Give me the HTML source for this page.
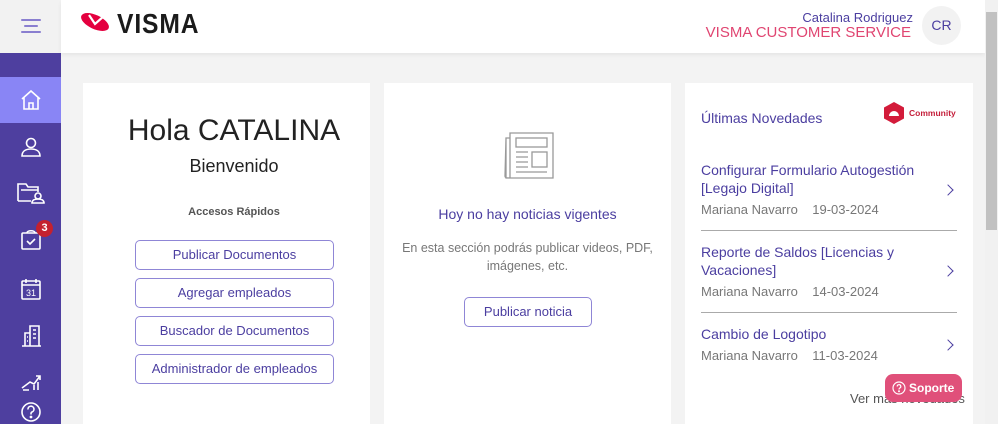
<!DOCTYPE html>
<html><head><meta charset="utf-8"><style>
*{box-sizing:border-box;margin:0;padding:0}
html{width:998px;height:424px;overflow:hidden}
body{width:998px;height:424px;overflow:hidden;background:#f3f3f3;font-family:"Liberation Sans",sans-serif;position:relative}
.side{position:absolute;left:0;top:0;width:61px;height:424px;background:#4e3f9f}
.side .top{height:53px;background:#f2f2f2;position:relative}
.hb{position:absolute;left:21px;height:2px;background:#8a7fd0;border-radius:1px}
.nav{position:absolute;left:0;width:61px;height:46px;display:flex;align-items:center;justify-content:center}
.hdr{position:absolute;left:61px;top:0;width:924px;height:53px;background:#fff;box-shadow:0 2px 4px rgba(0,0,0,.06)}
.sb{position:absolute;left:985px;top:0;width:13px;height:424px;background:#f1f1f1}
.sb div{position:absolute;left:1px;top:12px;width:11px;height:218px;background:#c1c1c1}
.card{position:absolute;top:83px;height:341px;background:#fff}
.btn{position:absolute;border:1px solid #8f86d6;border-radius:5px;color:#4b3ea0;font-size:13px;text-align:center;line-height:28px;height:30px;background:#fff}
.t{position:absolute;white-space:nowrap}
.item{color:#4b3ea0;font-size:14px;line-height:18px}
.meta{color:#777;font-size:13px}
.chev{position:absolute;left:944px;width:8px;height:8px;border-right:1.5px solid #4b3ea0;border-top:1.5px solid #4b3ea0;transform:rotate(45deg)}
.hr{position:absolute;left:701px;width:256px;height:1px;background:#aaa}
</style></head><body>
<div class="side">
 <div class="top"><div class="hb" style="top:19px;width:20px"></div><div class="hb" style="top:25px;width:14px;left:24px"></div><div class="hb" style="top:31px;width:20px"></div></div>
 <div class="nav" style="top:77px;background:#8985f5"><svg width="22" height="22" viewBox="0 0 22 22" fill="none" stroke="#fff" stroke-width="1.6"><path d="M2 10L11 2l9 8M4 8v12h14V8M9 20v-6h4v6"/></svg></div>
 <div class="nav" style="top:124px"><svg width="22" height="22" viewBox="0 0 22 22" fill="none" stroke="#fff" stroke-width="1.6"><circle cx="11" cy="7" r="4.5"/><path d="M2 20c0-5 4-7 9-7s9 2 9 7z"/></svg></div>
 <div class="nav" style="top:170px"><svg width="30" height="24" viewBox="0 0 30 24" fill="none" stroke="#fff" stroke-width="1.6"><path d="M2 20V3h8l2 3h10v5M2 20h13M5 9h17"/><circle cx="22" cy="15" r="3"/><path d="M16 22c0-3 3-4 6-4s6 1 6 4z"/></svg></div>
 <div class="nav" style="top:216px"><svg width="22" height="24" viewBox="0 0 22 24" fill="none" stroke="#fff" stroke-width="1.6"><rect x="2" y="6" width="18" height="16" rx="1"/><path d="M7 6c0-3 8-3 8 0M7 14l3 3 5-5"/></svg></div>
 <div style="position:absolute;left:36px;top:220px;width:17px;height:17px;border-radius:50%;background:#c4212f;color:#fff;font-size:11px;font-weight:bold;text-align:center;line-height:17px">3</div>
 <div class="nav" style="top:266px"><svg width="22" height="24" viewBox="0 0 22 24" fill="none" stroke="#fff" stroke-width="1.6"><rect x="2" y="4" width="18" height="18" rx="1"/><path d="M6 2v4M16 2v4M2 8h18"/><text x="11" y="19" font-size="9" fill="#fff" stroke="none" text-anchor="middle" font-family="Liberation Sans">31</text></svg></div>
 <div class="nav" style="top:313px"><svg width="22" height="24" viewBox="0 0 22 24" fill="none" stroke="#fff" stroke-width="1.6"><path d="M2 22h19M5 22V9h5M10 22V2h9v20M13 6h3M13 10h3M13 14h3M7 13h1M7 17h1"/></svg></div>
 <div class="nav" style="top:358px"><svg width="22" height="22" viewBox="0 0 22 22" fill="none" stroke="#fff" stroke-width="1.6"><path d="M2 18l8-6 4 2 6-8M16 6h4v4M14 20v-5M18 20v-8M3 20h6"/></svg></div>
 <div class="nav" style="top:389px"><svg width="22" height="22" viewBox="0 0 22 22" fill="none" stroke="#fff" stroke-width="1.6"><circle cx="11" cy="11" r="9"/><path d="M8 8.5a3 3 0 1 1 4 2.5c-1 .5-1 1-1 2.5"/><circle cx="11" cy="16" r=".6" fill="#fff"/></svg></div>
</div>
<div class="hdr">
 <svg style="position:absolute;left:18px;top:10px" width="32" height="24" viewBox="0 0 32 24"><ellipse cx="16" cy="12" rx="15" ry="7" transform="rotate(25 16 12)" fill="#e4003f"/><path d="M10 5l6 9 9-8" fill="none" stroke="#fff" stroke-width="2.2"/></svg>
 <div class="t" style="left:56px;top:8px;font-size:28px;font-weight:bold;color:#1b1b1b;letter-spacing:1px;transform:scaleX(.88);transform-origin:left">VISMA</div>
 <div class="t" style="right:72px;top:10px;font-size:13px;color:#4b3ea0">Catalina Rodriguez</div>
 <div class="t" style="right:74px;top:24px;font-size:15px;color:#e04571">VISMA CUSTOMER SERVICE</div>
 <div style="position:absolute;left:861px;top:6px;width:39px;height:39px;border-radius:50%;background:#f2f2f2;color:#4b3ea0;font-size:14px;text-align:center;line-height:39px">CR</div>
</div>
<div class="sb"><div></div></div>
<div class="card" style="left:83px;width:287px"></div>
<div class="card" style="left:384px;width:287px"></div>
<div class="card" style="left:685px;width:288px"></div>
<div class="t" style="left:83px;width:302px;text-align:center;top:114px;font-size:30px;color:#222">Hola CATALINA</div>
<div class="t" style="left:83px;width:302px;text-align:center;top:156px;font-size:18px;color:#222">Bienvenido</div>
<div class="t" style="left:83px;width:302px;text-align:center;top:206px;font-size:11px;color:#555;font-weight:bold">Accesos Rápidos</div>
<div class="btn" style="left:135px;top:240px;width:199px">Publicar Documentos</div>
<div class="btn" style="left:135px;top:278px;width:199px">Agregar empleados</div>
<div class="btn" style="left:135px;top:316px;width:199px">Buscador de Documentos</div>
<div class="btn" style="left:135px;top:354px;width:199px">Administrador de empleados</div>
<svg style="position:absolute;left:501px;top:128px" width="53" height="53" viewBox="0 0 53 53" fill="none" stroke="#999" stroke-width="1.3"><path d="M9 5h43v45H5V10h4zM9 10v40M5 10l-1 38c0 2 2 2 5 2"/><rect x="15" y="10" width="31" height="9"/><path d="M15 24h12M15 29h12M15 34h12M15 39h12M15 44h31"/><rect x="31" y="24" width="15" height="15"/></svg>
<div class="t" style="left:384px;width:287px;text-align:center;top:206px;font-size:14px;color:#4b3ea0">Hoy no hay noticias vigentes</div>
<div class="t" style="left:384px;width:287px;text-align:center;top:239px;font-size:12.5px;color:#777;line-height:18px;white-space:normal;padding:0 18px">En esta sección podrás publicar videos, PDF, imágenes, etc.</div>
<div class="btn" style="left:464px;top:297px;width:128px">Publicar noticia</div>
<div class="t" style="left:701px;top:110px;font-size:14px;color:#4b3ea0">Últimas Novedades</div>
<svg style="position:absolute;left:883px;top:101px" width="22" height="24" viewBox="0 0 22 24"><path d="M11 1l10 5.5v11L11 23 1 17.5v-11z" fill="#d31b3a"/><path d="M6 15a5 5 0 1 1 10 0z" fill="#fff"/></svg>
<div class="t" style="left:909px;top:108px;font-size:8.5px;font-weight:bold;color:#c41e3a">Community</div>
<div class="t item" style="left:701px;top:161px">Configurar Formulario Autogestión<br>[Legajo Digital]</div>
<div class="t meta" style="left:701px;top:202px">Mariana Navarro &nbsp;&nbsp; 19-03-2024</div>
<div class="chev" style="top:186px"></div>
<div class="hr" style="top:230px"></div>
<div class="t item" style="left:701px;top:243px">Reporte de Saldos [Licencias y<br>Vacaciones]</div>
<div class="t meta" style="left:701px;top:284px">Mariana Navarro &nbsp;&nbsp; 14-03-2024</div>
<div class="chev" style="top:267px"></div>
<div class="hr" style="top:312px"></div>
<div class="t item" style="left:701px;top:325px">Cambio de Logotipo</div>
<div class="t meta" style="left:701px;top:348px">Mariana Navarro &nbsp;&nbsp; 11-03-2024</div>
<div class="chev" style="top:341px"></div>
<div class="t meta" style="left:850px;top:391px;font-size:13px;color:#555">Ver más novedades</div>
<div style="position:absolute;left:885px;top:374px;width:77px;height:28px;border-radius:8px;background:#e0507a;color:#fff;font-size:12px;font-weight:bold;line-height:28px;padding-left:24px">Soporte
 <svg style="position:absolute;left:7px;top:7px" width="14" height="14" viewBox="0 0 14 14" fill="none" stroke="#fff" stroke-width="1.2"><circle cx="7" cy="7" r="6"/><path d="M5.2 5.5a1.8 1.8 0 1 1 2.5 1.6c-.6.3-.7.6-.7 1.4"/><circle cx="7" cy="10.3" r=".4" fill="#fff"/></svg>
</div>
</body></html>
